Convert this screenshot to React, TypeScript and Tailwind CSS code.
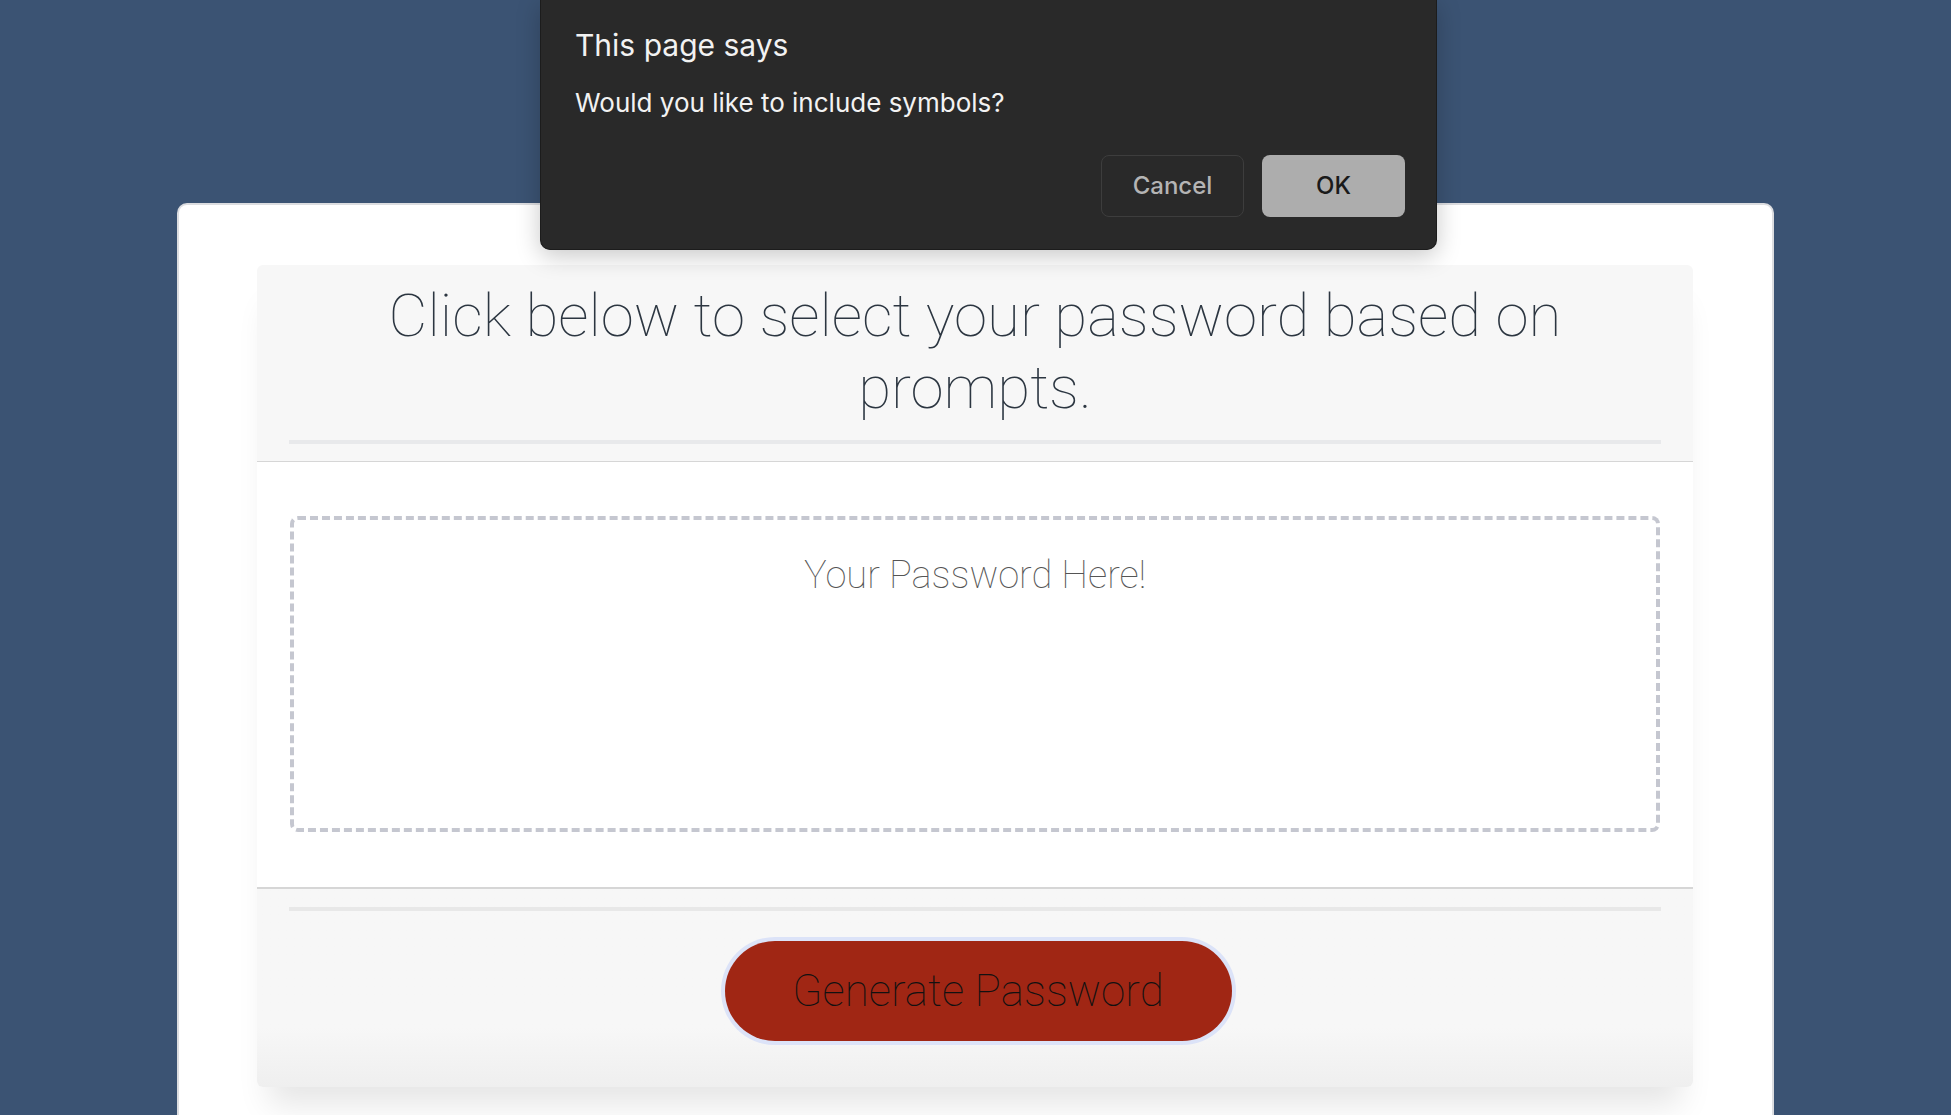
import React from "react";

const PromptDialog = () => (
  <div className="absolute top-0 left-[540px] w-[897px] h-[250px] bg-[#292929] rounded-b-[10px] border border-t-0 border-[#1c1c1c] shadow-[0_6px_24px_rgba(0,0,0,0.22)] font-['Inter',sans-serif] pl-[34px] pr-[31px] pt-[27px] flex flex-col">
    <h3 className="text-[30px] leading-[36px] text-[#f2f2f2] font-normal">This page says</h3>
    <p className="mt-[25px] text-[26px] leading-[30px] text-[#f2f2f2]">Would you like to include symbols?</p>
    <div className="mt-[37px] flex justify-end gap-[18px]">
      <button className="w-[143px] h-[62px] rounded-[8px] border border-[#3d3d3d] bg-[#292929] text-[24px] font-medium text-[#b4b4b4]">
        Cancel
      </button>
      <button className="w-[143px] h-[62px] rounded-[8px] bg-[#adadad] text-[24px] font-medium text-[#1a1a1a]">
        OK
      </button>
    </div>
  </div>
);

export default function App() {
  return (
    <div className="relative h-[1115px] overflow-hidden bg-[#3b5373] font-['Roboto',sans-serif]">
      <div className="pt-[203px]">
        <div className="mx-auto w-[1597px] h-[1000px] bg-white rounded-t-[10px] border-2 border-b-0 border-[#dcdde0] pl-[78px] pr-[79px] pt-[60px]">
          <div className="rounded-[6px] shadow-[0_30px_30px_-12px_rgba(0,0,0,0.1)]">
            <div className="bg-[#f7f7f7] rounded-t-[6px] border-b border-[#d6d6d6] px-8 pt-[15px] pb-[17px]">
              <h2 className="text-center text-[60px] leading-[72px] font-thin text-[#2c3641]">
                Click below to select your password based on prompts.
              </h2>
              <div className="mt-4 h-1 bg-[#e8e9eb]" />
            </div>
            <div className="bg-white px-[33px] pt-[54px] pb-[55px]">
              <div className="h-[316px] border-4 border-dashed border-[#c5c7d0] rounded-[8px] pt-[34px] text-center text-[38px] leading-[42px] font-thin text-[#555555]">
                Your Password Here!
              </div>
            </div>
            <div className="bg-gradient-to-b from-[#f7f7f7] from-70% to-[#efefef] border-t-2 border-[#d6d6d6] rounded-b-[6px] px-8 pt-[18px] pb-[46px]">
              <div className="h-1 bg-[#e8e8e8]" />
              <div className="mt-[30px] flex justify-center pl-[6px]">
                <button className="w-[507px] h-[100px] rounded-full bg-[#a02614] ring-4 ring-[#dce3f8] text-[44px] font-thin text-[#111111]">
                  Generate Password
                </button>
              </div>
            </div>
          </div>
        </div>
      </div>
      <PromptDialog />
    </div>
  );
}
